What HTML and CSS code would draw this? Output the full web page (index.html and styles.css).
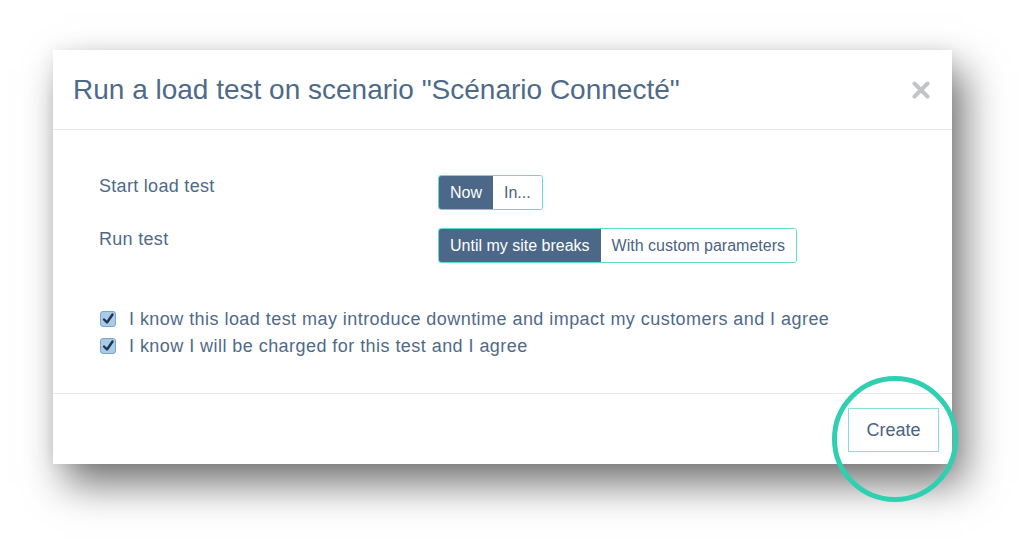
FILE: index.html
```html
<!DOCTYPE html>
<html>
<head>
<meta charset="utf-8">
<link rel="stylesheet" href="styles.css">
</head>
<body>
<div class="stage">
  <div class="modal">
    <div class="modal-header">
      <h1 class="title">Run a load test on scenario "Scénario Connecté"</h1>
      <span class="close" aria-label="close">
        <svg width="18" height="18" viewBox="0 0 18 18"><path d="M2.5 2.5 L15.5 15.5 M15.5 2.5 L2.5 15.5" stroke="#c2c4c6" stroke-width="4" stroke-linecap="round"/></svg>
      </span>
    </div>
    <div class="modal-body">
      <div class="form-grid">
        <div class="label">Start load test</div>
        <div class="btn-group">
          <span class="seg active">Now</span><span class="seg">In...</span>
        </div>
        <div class="label">Run test</div>
        <div class="btn-group">
          <span class="seg active">Until my site breaks</span><span class="seg">With custom parameters</span>
        </div>
      </div>
      <div class="checks">
        <label class="check">
          <span class="box"><svg width="14" height="14" viewBox="0 0 14 14"><path d="M3 7.5 L6 10.5 L11.5 2.5" fill="none" stroke="#1f3550" stroke-width="2.4" stroke-linecap="round" stroke-linejoin="round"/></svg></span>
          I know this load test may introduce downtime and impact my customers and I agree
        </label>
        <label class="check">
          <span class="box"><svg width="14" height="14" viewBox="0 0 14 14"><path d="M3 7.5 L6 10.5 L11.5 2.5" fill="none" stroke="#1f3550" stroke-width="2.4" stroke-linecap="round" stroke-linejoin="round"/></svg></span>
          I know I will be charged for this test and I agree
        </label>
      </div>
    </div>
    <div class="modal-footer">
      <span class="create">Create</span>
      <span class="ring"></span>
    </div>
  </div>
</div>
</body>
</html>
```

FILE: styles.css
```css
html, body {
  margin: 0;
  padding: 0;
  background: #ffffff;
}
body {
  font-family: "Liberation Sans", Arial, sans-serif;
  color: #4c6786;
  min-height: 543px;
}
.stage {
  padding: 50px 0 0 53px;
  height: 543px;
  box-sizing: border-box;
}
.modal {
  width: 899px;
  height: 414px;
  background: #fff;
  display: flex;
  flex-direction: column;
  box-shadow: 12px 20px 38px rgba(0,0,0,0.55), 0 0 14px rgba(0,0,0,0.06);
  position: relative;
}
.modal-header {
  height: 79px;
  border-bottom: 1px solid #e8e8e8;
  display: flex;
  align-items: center;
  justify-content: space-between;
  padding: 0 22px 0 20px;
  flex: none;
}
.title {
  margin: 0;
  font-size: 28px;
  font-weight: normal;
  color: #4f6a89;
  letter-spacing: 0;
}
.close {
  display: flex;
  margin-top: 1px;
}
.modal-body {
  flex: 1;
  padding: 45px 0 0 46px;
}
.form-grid {
  display: grid;
  grid-template-columns: 339px auto;
  row-gap: 18px;
  align-items: start;
}
.label {
  font-size: 18px;
  letter-spacing: 0.3px;
  color: #4f6a89;
  padding-top: 1px;
}
.btn-group {
  display: flex;
  justify-self: start;
  border: 1px solid #62dcce;
  border-radius: 3px;
  overflow: hidden;
  height: 33px;
}
.seg {
  display: flex;
  align-items: center;
  padding: 0 11px;
  font-size: 16px;
  color: #4a6483;
  background: #fff;
}
.seg.active {
  background: #4b6888;
  color: #fff;
}
.checks {
  margin-top: 45px;
  display: flex;
  flex-direction: column;
  gap: 5px;
  padding-left: 1px;
}
.check {
  display: flex;
  align-items: center;
  gap: 13px;
  font-size: 18px;
  letter-spacing: 0.45px;
  color: #4f6a89;
  height: 22px;
}
.box {
  width: 14px;
  height: 14px;
  border-radius: 3px;
  background: #a9cbe8;
  border: 1px solid #7fa6c8;
  display: flex;
  align-items: center;
  justify-content: center;
}
.modal-footer {
  height: 71px;
  border-top: 1px solid #e8e8e8;
  flex: none;
  display: flex;
  justify-content: flex-end;
  align-items: flex-start;
  padding: 14px 13px 0 0;
  box-sizing: border-box;
  position: relative;
}
.create {
  display: flex;
  align-items: center;
  justify-content: center;
  width: 89px;
  height: 42px;
  border: 1px solid #84e2d8;
  font-size: 18px;
  color: #4a6483;
}
.ring {
  position: absolute;
  left: 779px;
  top: -18px;
  width: 116px;
  height: 116px;
  border: 5px solid #2fcfb2;
  border-radius: 50%;
  pointer-events: none;
}
```
